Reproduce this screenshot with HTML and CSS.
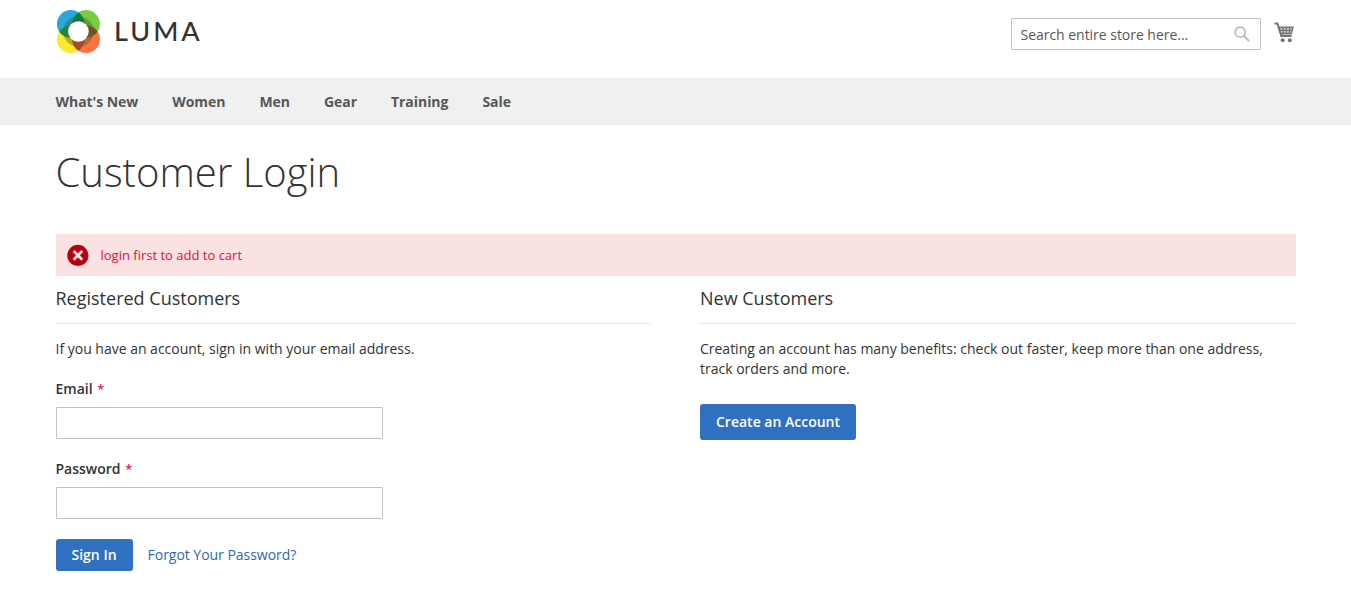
FILE: index.html
```html
<!DOCTYPE html>
<html lang="en">
<head>
<meta charset="utf-8">
<title>Customer Login</title>
<link rel="stylesheet" href="styles.css">
</head>
<body>
<header class="header">
  <a class="logo">
    <svg class="logo-mark" viewBox="0 0 44 44" width="44" height="44">
      <defs>
        <clipPath id="c1"><circle cx="14.7" cy="13.9" r="13.8"/></clipPath>
        <clipPath id="c2"><circle cx="30.1" cy="13.9" r="13.8"/></clipPath>
        <clipPath id="c3"><circle cx="14.7" cy="29.3" r="13.8"/></clipPath>
      </defs>
      <circle cx="14.7" cy="13.9" r="13.8" fill="#2ba5de"/>
      <circle cx="30.1" cy="13.9" r="13.8" fill="#78ca43"/>
      <circle cx="14.7" cy="29.3" r="13.8" fill="#fde82f"/>
      <circle cx="30.1" cy="29.3" r="13.8" fill="#ff7044"/>
      <circle cx="22.4" cy="21.6" r="15.2" fill="#3f5a1e" fill-opacity=".4"/>
      <g clip-path="url(#c1)">
        <circle cx="30.1" cy="13.9" r="13.8" fill="#087b42"/>
        <circle cx="14.7" cy="29.3" r="13.8" fill="#24813f"/>
      </g>
      <g clip-path="url(#c2)"><circle cx="30.1" cy="29.3" r="13.8" fill="#6d5527"/></g>
      <g clip-path="url(#c3)"><circle cx="30.1" cy="29.3" r="13.8" fill="#a84a28"/></g>
      <circle cx="22.4" cy="21.5" r="10.3" fill="#fff"/>
    </svg>
    <span class="logo-text">LUMA</span>
  </a>
  <div class="tools">
    <form class="search">
      <input class="search-input" type="text" placeholder="Search entire store here...">
      <svg class="search-icon" viewBox="0 0 16 16" width="16" height="16"><circle cx="6.2" cy="6.2" r="5.1" fill="none" stroke="#b9b9b9" stroke-width="1.6"/><path d="M10 10l5 5" stroke="#b9b9b9" stroke-width="2"/></svg>
    </form>
    <svg class="cart" viewBox="0 0 21 21" width="21" height="21">
      <path d="M.5 1.6H3.4L7.3 14H17.5" fill="none" stroke="#757575" stroke-width="2"/>
      <path fill="#757575" fill-rule="evenodd" d="M4 4.5H20L17.8 12.6H6.5ZM6.4 6.2v1.2h1.8V6.2zm3.4 0v1.2h1.8V6.2zm3.3 0v1.2h1.8V6.2zm3.3 0v1.2h1.4V6.2zM7 9.2v1.4h1.5V9.2zm3 0v1.4h1.6V9.2zm3.1 0v1.4h1.6V9.2zm3.1 0v1.4h1V9.2z"/>
      <circle cx="8.7" cy="18.2" r="2" fill="#757575"/><circle cx="15.8" cy="18.2" r="2" fill="#757575"/>
    </svg>
  </div>
</header>
<nav class="nav">
  <a>What's New</a><a>Women</a><a>Men</a><a>Gear</a><a>Training</a><a>Sale</a>
</nav>
<main class="main">
  <h1 class="title">Customer Login</h1>
  <div class="message">
    <svg class="message-icon" viewBox="0 0 22 22" width="22" height="22"><circle cx="10.9" cy="11.4" r="10.6" fill="#b9000f"/><path d="M6.6 7.1l8.6 8.6M15.2 7.1l-8.6 8.6" stroke="#fae1e2" stroke-width="2.8"/></svg>
    <span>login first to add to cart</span>
  </div>
  <div class="columns">
    <section class="block">
      <h2 class="block-title">Registered Customers</h2>
      <p class="note">If you have an account, sign in with your email address.</p>
      <form class="login">
        <label class="label" for="email">Email<span class="required">*</span></label>
        <input class="field" id="email" type="text">
        <label class="label" for="pass">Password<span class="required">*</span></label>
        <input class="field" id="pass" type="password">
        <div class="actions">
          <button class="button" type="button">Sign In</button>
          <a class="link">Forgot Your Password?</a>
        </div>
      </form>
    </section>
    <section class="block">
      <h2 class="block-title">New Customers</h2>
      <p class="note">Creating an account has many benefits: check out faster, keep more than one address, track orders and more.</p>
      <button class="button button-create" type="button">Create an Account</button>
    </section>
  </div>
</main>
</body>
</html>
```
FILE: styles.css
```css
* { box-sizing: border-box; }
body {
  margin: 0;
  background: #fff;
  color: #333;
  font: 14px/20px "Open Sans", sans-serif;
  overflow: hidden;
}
.header {
  display: flex;
  justify-content: space-between;
  align-items: flex-start;
  height: 78px;
  padding: 0 56px;
}
.logo { display: flex; padding-top: 10px; }
.logo-mark { display: block; }
.logo-text {
  margin-left: 14px;
  font: 500 27px/42px Lato, sans-serif;
  letter-spacing: 3px;
}
.tools { display: flex; padding-top: 18px; }
.search { position: relative; width: 250px; height: 32px; }
.search-input, .field {
  display: block;
  height: 32px;
  padding: 0 9px;
  border: 1px solid #c2c2c2;
  border-radius: 1px;
  background: #fff;
  font: 14px/20px "Open Sans", sans-serif;
}
.search-input { width: 250px; padding: 0 8.5px; letter-spacing: -.03px; }
.search-input::placeholder { color: #575757; opacity: 1; }
.search-icon { position: absolute; right: 11px; top: 8px; }
.cart { display: block; margin: 4px 0 0 13px; }
.nav {
  display: flex;
  gap: 34px;
  height: 47px;
  padding: 0 55.5px;
  background: #f0f0f0;
  color: #575757;
  font-weight: 700;
  line-height: 47px;
  letter-spacing: -.05px;
}
.main { padding: 0 55.5px; }
.title {
  margin: 0;
  padding-top: 25px;
  height: 109px;
  font-size: 40px;
  font-weight: 300;
  line-height: 44px;
}
.message {
  display: flex;
  align-items: center;
  gap: 12px;
  height: 42px;
  padding-left: 11px;
  background: #fae1e2;
  color: #e5103f;
  font-size: 13px;
}
.message-icon { display: block; }
.columns {
  display: grid;
  grid-template-columns: 595px 595.5px;
  justify-content: space-between;
  padding-top: 12px;
}
.block-title {
  height: 36px;
  margin: 0 0 15px;
  border-bottom: 1px solid #e8e8e8;
  font-size: 18px;
  font-weight: 400;
  line-height: 20px;
}
.note { margin: 0; letter-spacing: -.01px; }
.login { padding-top: 20px; }
.label { display: block; height: 28px; font-weight: 600; }
.required { margin-left: 5px; color: #e5103f; font-size: 12px; }
.field { width: 327px; margin-bottom: 20px; }
.actions { display: flex; align-items: center; gap: 15px; }
.button {
  height: 32px;
  padding: 0 16px;
  border: 0;
  border-radius: 3px;
  background: #3070c1;
  color: #fff;
  font: 600 14px/20px "Open Sans", sans-serif;
}
.button-create { height: 36px; margin-top: 25px; }
.link { color: #2e69b3; letter-spacing: -.03px; }
```
